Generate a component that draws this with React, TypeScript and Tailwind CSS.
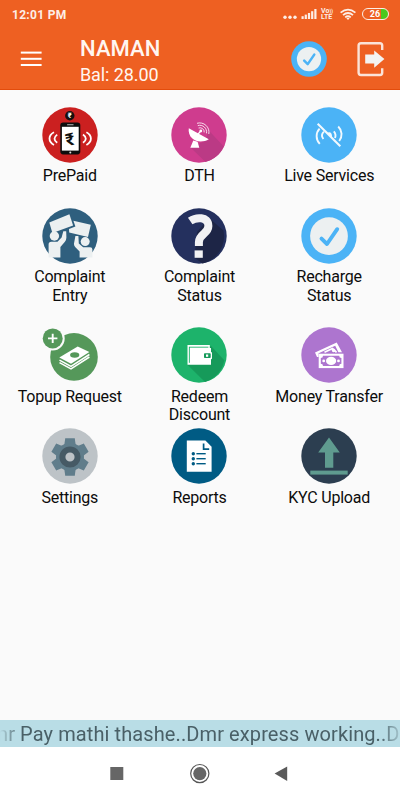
import React from "react";

function Disc({ fill, children }: { fill: string; children?: React.ReactNode }) {
  return (
    <svg viewBox="0 0 56 56" className="block h-14 w-14 shrink-0">
      <circle cx="28" cy="28" r="27.7" fill={fill} />
      {children}
    </svg>
  );
}

function PrepaidIcon() {
  return (
    <Disc fill="#cb2020">
      <circle cx="27.8" cy="8.8" r="4.7" fill="#151010" />
      <text x="27.8" y="11.4" textAnchor="middle" fontSize="7.5" fontWeight="700" fill="#fff" className="font-['Roboto']">₹</text>
      <rect x="18.3" y="15.4" width="20" height="32" rx="2.8" fill="#0d0d0d" />
      <rect x="19.9" y="19.8" width="16.8" height="23.8" fill="#fff" />
      <rect x="25" y="17.2" width="6.6" height="1" rx=".5" fill="#bbb" />
      <circle cx="28.3" cy="45.4" r="1" fill="#ddd" />
      <text x="28" y="38.4" textAnchor="middle" fontSize="17" fontWeight="700" fill="#111" transform="rotate(-14 28 32)" className="font-['Roboto']">₹</text>
      <g fill="none" stroke="#fff" strokeWidth="1.8">
        <path d="M12 25.3C6 28.4 6 34.8 12 38" />
        <path d="M15.2 27.6Q9.8 31.6 15.2 35.8" />
        <path d="M44.4 25.3C50.4 28.4 50.4 34.8 44.4 38" />
        <path d="M41 27.6Q46.6 31.6 41 35.8" />
      </g>
    </Disc>
  );
}

function DishIcon() {
  return (
    <Disc fill="#cf3c8e">
      <path d="M37.8 23.5L52.8 39.6A27.7 27.7 0 0 1 34.5 54.9L19.5 40.5L34 34Z" fill="#bb3a85" />
      <path d="M17.8 21.2L37.8 32.2C33.5 35 25.5 35.6 21.4 31.6C18.4 28.8 17.2 25 17.8 21.2Z" fill="#fff" />
      <path d="M22.3 33.5L26.6 34.8L28.3 40.8H19.3Z" fill="#fff" />
      <path d="M26.8 27.5L29.6 24.2" stroke="#fff" strokeWidth="1.3" />
      <circle cx="29.8" cy="24" r="1.4" fill="#fff" />
      <g fill="none" stroke="#fff" strokeOpacity=".8" strokeWidth="1">
        <path d="M27.6 21A4.2 4.2 0 0 1 33.2 25.4" />
        <path d="M26.8 18.6A6.8 6.8 0 0 1 35.5 26.3" />
        <path d="M26 16.3A9.3 9.3 0 0 1 37.8 27" />
      </g>
    </Disc>
  );
}

function LiveIcon() {
  return (
    <Disc fill="#4bb3f6">
      <g fill="none" stroke="#f2f9fe" strokeWidth="1.9">
        <path d="M18.6 21.6C14.6 26 14.6 32.4 18.8 36.8" />
        <path d="M22.9 24.6Q19.2 28.2 22.4 32" />
        <path d="M32.8 24.4C34.6 26.4 35 28.6 34 31" />
        <path d="M37.2 19.5C41.4 23.6 41.6 29.6 38.2 34" />
        <path d="M16.7 16.8L39.3 39.2" strokeWidth="2.1" />
      </g>
      <path d="M26 26.2L31 31Q31.4 25.6 28.6 25.2Q26.8 25.2 26 26.2Z" fill="#f2f9fe" />
    </Disc>
  );
}

function ProtestIcon() {
  return (
    <Disc fill="#2f5f7e">
      <g fill="#ecf0f1">
        <circle cx="12.4" cy="28" r="4.7" />
        <path d="M6.6 49.6V36.6Q6.6 33.8 9.4 33.8H15.5L19.6 29.6L21.3 23.2H24.2L24.4 29.6Q24.4 32 22.9 33.8L18.4 39V49.6Z" />
        <circle cx="43.2" cy="33.6" r="4.5" />
        <path d="M50.4 49.6V41.6Q50.4 39.2 48 39.2H41.2L36.8 35.4L36.4 28H33.4L32 35.4Q31.8 37.6 33.4 39.2L37.6 43.4V49.6Z" />
        <path d="M7.3 14.6L27.4 6.2L31.1 17.6L10.4 25Z" />
        <path d="M31.4 12.8L48.8 16.8L46 28.9L27.2 24.6L27 20.9L33.4 18.5Z" />
      </g>
    </Disc>
  );
}

function QuestionIcon() {
  return (
    <Disc fill="#24305e">
      <path d="M38 10L52.4 22.6A27.7 27.7 0 0 1 31.6 55.4L23.5 49.8L26 24Z" fill="#1d2546" />
      <path d="M19.2 13C24.8 9.2 37.4 8 37.4 18C37.4 26.2 27.9 25.6 27.9 34.2V38" fill="none" stroke="#f1f2f4" strokeWidth="8" />
      <rect x="23.6" y="42.4" width="8.2" height="7.4" fill="#f1f2f4" />
    </Disc>
  );
}

function CheckIcon({ size }: { size: string }) {
  return (
    <svg viewBox="0 0 56 56" className={"block shrink-0 " + size}>
      <circle cx="28" cy="28" r="27.7" fill="#4bb3f6" />
      <circle cx="28" cy="28.1" r="18.9" fill="#ecf0f1" />
      <path d="M20.5 30.6L26 36L36.2 21.2" fill="none" stroke="#4bb3f6" strokeWidth="3.9" strokeLinecap="round" strokeLinejoin="round" />
    </svg>
  );
}

function TopupIcon() {
  return (
    <svg viewBox="0 0 56 56" className="block h-14 w-14 shrink-0">
      <circle cx="32" cy="29.9" r="23.8" fill="#55985a" />
      <circle cx="10.7" cy="11.4" r="12" fill="#fafafa" />
      <circle cx="10.7" cy="11.4" r="10" fill="#55985a" />
      <path d="M6 11.4H15.4M10.7 6.7V16.1" stroke="#fff" strokeWidth="1.9" />
      <path d="M17.3 30.6L35.7 19.6L47.4 25L29 36.7Z" fill="#fff" />
      <g fill="none" stroke="#fff" strokeWidth="1.5">
        <path d="M17.5 33.2L29 39.4L47.4 27.5" />
        <path d="M17.5 35.7L29 41.8L47.4 30" />
      </g>
      <ellipse cx="32.7" cy="28" rx="4.6" ry="2.8" fill="#55985a" />
    </svg>
  );
}

function WalletIcon() {
  return (
    <Disc fill="#1db36b">
      <path d="M40 19L53.3 33.2A27.7 27.7 0 0 1 34 55L16.5 37.7Z" fill="#169a5a" />
      <path d="M16.5 18H38.8V21H40V37.7H16.5Z" fill="#fff" />
      <path d="M18 20.2H37.4M18.4 20V35.8" stroke="#1db36b" strokeWidth=".9" />
      <rect x="32.2" y="25" width="8.8" height="7.3" rx="1" fill="#fff" />
      <rect x="33" y="26.3" width="6.7" height="4.8" rx=".8" fill="#169a5a" />
      <rect x="35" y="27.5" width="2.2" height="2.3" fill="#fff" />
    </Disc>
  );
}

function MoneyIcon() {
  return (
    <Disc fill="#ad75cf">
      <path d="M14 25.6L35.7 15.6L41 25.3H37.4L34.2 18.7L17.6 26.2V30H16Z" fill="#fff" />
      <path d="M23.5 25.3L31.5 21.6Q34 23.6 35.6 25.3" fill="none" stroke="#fff" strokeWidth="1.7" />
      <circle cx="32.6" cy="23.4" r="1.8" fill="#fff" />
      <rect x="17.7" y="26.7" width="24.8" height="14.4" fill="#fff" />
      <path d="M22 28.8H38.2Q38.2 31 40.4 31V36.8Q38.2 36.8 38.2 39H22Q22 36.8 19.8 36.8V31Q22 31 22 28.8Z" fill="#ad75cf" />
      <ellipse cx="30.1" cy="33.9" rx="5.1" ry="4.2" fill="#fff" />
      <circle cx="22.7" cy="33.9" r="1.4" fill="#fff" />
      <circle cx="37.5" cy="33.9" r="1.4" fill="#fff" />
    </Disc>
  );
}

function GearIcon() {
  return (
    <Disc fill="#bdc3c7">
      <g fill="#607d8b">
        <circle cx="28" cy="29" r="14" />
        {[0, 60, 120].map((a) => (
          <path key={a} d="M23.2 10.3H32.8L33.8 18V40L32.8 47.7H23.2L22.2 40V18Z" transform={`rotate(${a} 28 29)`} />
        ))}
      </g>
      <circle cx="28" cy="29" r="7.6" fill="#bdc3c7" stroke="#465a65" strokeWidth="6" />
    </Disc>
  );
}

function ReportIcon() {
  return (
    <Disc fill="#005b84">
      <path d="M15.8 12.6H34.4L40.6 18.8V43.8H15.8Z" fill="#fff" />
      <path d="M32.6 15.4V21.1H38.2" fill="none" stroke="#005b84" strokeWidth="1.7" />
      <g fill="#005b84">
        {[25.7, 30.7, 35.7].map((y) => (
          <React.Fragment key={y}>
            <circle cx="22.3" cy={y} r="1.7" />
            <rect x="25.4" y={y - 0.7} width="9.3" height="1.4" />
          </React.Fragment>
        ))}
      </g>
    </Disc>
  );
}

function UploadIcon() {
  return (
    <Disc fill="#2c3e50">
      <path d="M28 9.6L38.8 24.4H32.3V39.7H24V24.4H17.2Z" fill="#5f9b8f" />
      <rect x="9.3" y="42.6" width="37.4" height="4" fill="#5f9b8f" />
    </Disc>
  );
}

type Item = { label: string[]; icon: React.ReactNode };

const rows: { height: string; items: Item[] }[] = [
  {
    height: "h-[101px]",
    items: [
      { label: ["PrePaid"], icon: <PrepaidIcon /> },
      { label: ["DTH"], icon: <DishIcon /> },
      { label: ["Live Services"], icon: <LiveIcon /> },
    ],
  },
  {
    height: "h-[119.5px]",
    items: [
      { label: ["Complaint", "Entry"], icon: <ProtestIcon /> },
      { label: ["Complaint", "Status"], icon: <QuestionIcon /> },
      { label: ["Recharge", "Status"], icon: <CheckIcon size="h-14 w-14" /> },
    ],
  },
  {
    height: "h-[101px]",
    items: [
      { label: ["Topup Request"], icon: <TopupIcon /> },
      { label: ["Redeem", "Discount"], icon: <WalletIcon /> },
      { label: ["Money Transfer"], icon: <MoneyIcon /> },
    ],
  },
  {
    height: "h-[101px]",
    items: [
      { label: ["Settings"], icon: <GearIcon /> },
      { label: ["Reports"], icon: <ReportIcon /> },
      { label: ["KYC Upload"], icon: <UploadIcon /> },
    ],
  },
];

function StatusBar() {
  return (
    <div className="flex h-7 items-center justify-between pr-[11px] pl-[12px] text-white">
      <span className="pt-px text-[12px] leading-none font-bold tracking-[0.3px] text-[#fdeee6]">12:01 PM</span>
      <div className="flex items-center">
        <svg viewBox="0 0 36 14" className="h-[14px] w-9" fill="#fdeee6">
          <circle cx="2" cy="10.2" r="1.7" />
          <circle cx="7" cy="10.2" r="1.7" />
          <circle cx="12" cy="10.2" r="1.7" />
          <rect x="18.5" y="9.2" width="2.2" height="2.8" />
          <rect x="21.7" y="7.6" width="2.2" height="4.4" />
          <rect x="24.9" y="6" width="2.2" height="6" />
          <rect x="28.1" y="4.2" width="2.2" height="7.8" />
          <rect x="31.3" y="2" width="2.2" height="10" />
        </svg>
        <div className="ml-[2.5px] flex w-[13px] flex-col text-[7px] leading-[6.5px] font-bold text-[#fdeee6]">
          <span>Vo<span className="text-[5px]">))</span></span>
          <span>LTE</span>
        </div>
        <svg viewBox="0 0 18 14" className="ml-[5px] h-[14px] w-[18px]" fill="none" stroke="#fdeee6" strokeWidth="1.8">
          <path d="M1.6 5.6Q9 -.4 16.4 5.6" />
          <path d="M4 8.1Q9 4 14 8.1" />
          <path d="M6.2 10.4Q9 8.2 11.8 10.4" />
          <path d="M9 13L7.4 11.3Q9 10.2 10.6 11.3Z" fill="#fdeee6" stroke="none" />
        </svg>
        <div className="ml-[5px] flex h-[12px] w-[27px] overflow-hidden rounded-full border-[1.5px] border-[#fdeee6] bg-[linear-gradient(90deg,transparent_0_72%,#4cc81c_72%)]">
          <span className="w-full pr-px text-center text-[9px] leading-[10px] font-bold text-white">26</span>
        </div>
      </div>
    </div>
  );
}

function Header() {
  return (
    <header className="h-[90px] shrink-0 border-b border-[#e34c0c] bg-[#ee6022] text-[#fff6f1]">
      <StatusBar />
      <div className="flex h-[61px] items-start">
        <svg viewBox="0 0 22 16" className="mt-[22.5px] ml-[20px] h-4 w-[22px]" fill="#fff">
          <rect x=".8" y=".6" width="20.8" height="2" />
          <rect x=".8" y="6.8" width="20.8" height="2" />
          <rect x=".8" y="13" width="20.8" height="2" />
        </svg>
        <div className="mt-[8px] ml-[38px] w-[211px]">
          <div className="text-[22px] leading-[26px] font-medium tracking-[0.1px]">NAMAN</div>
          <div className="mt-px text-[18px] leading-[24px] tracking-[-0.1px]">Bal: 28.00</div>
        </div>
        <div className="mt-[13px]">
          <CheckIcon size="h-9 w-9" />
        </div>
        <svg viewBox="0 0 30 36" className="mt-[13px] ml-[29px] h-9 w-[30px]">
          <path d="M26.2 9V4.4Q26.2 2.2 24 2.2H5Q2.6 2.2 2.6 4.6V31.6Q2.6 34 5 34H24Q26.2 34 26.2 31.8V27.2" fill="none" stroke="#fbe3d8" strokeWidth="2.4" />
          <path d="M9.2 13.6H18.2V9.4L28.4 18L18.2 26.8V22.6H9.2Z" fill="#f3f3f2" />
        </svg>
      </div>
    </header>
  );
}

export default function App() {
  return (
    <div className="flex h-[800px] w-[400px] flex-col overflow-hidden bg-[#fafafa] font-['Roboto',sans-serif]">
      <Header />
      <main className="flex-1 pt-[16.5px] pr-[6px] pl-[5px]">
        {rows.map((row, i) => (
          <div key={i} className={"grid grid-cols-3 " + row.height}>
            {row.items.map((item, j) => (
              <div key={j} className="flex flex-col items-center">
                {item.icon}
                <div className="mt-[4.5px] text-center text-[16px] leading-[18.5px] tracking-[-0.22px] whitespace-nowrap text-[#0c0c0c]">
                  {item.label.map((line) => (
                    <div key={line}>{line}</div>
                  ))}
                </div>
              </div>
            ))}
          </div>
        ))}
      </main>
      <div className="flex h-[27.5px] shrink-0 bg-[#b9dde6]">
        <div className="flex w-full items-center [mask-image:linear-gradient(90deg,transparent,black_20px,black_380px,transparent_404px)]">
          <span className="-ml-[9.5px] pt-[2px] text-[20px] leading-[27px] tracking-[0.1px] whitespace-nowrap text-[#4a6067]">
            mr Pay mathi thashe..Dmr express working..D
          </span>
        </div>
      </div>
      <nav className="flex h-[53px] shrink-0 items-center bg-white">
        <svg viewBox="0 0 400 53" className="h-[53px] w-[400px]">
          <rect x="110.3" y="20" width="13" height="13" fill="#666" />
          <circle cx="199.8" cy="26.6" r="9.1" fill="none" stroke="#555" strokeWidth="1.2" />
          <circle cx="199.8" cy="26.6" r="6.6" fill="#666" />
          <path d="M274.6 26.6L287.2 19.4V34Z" fill="#5a5a5a" />
        </svg>
      </nav>
    </div>
  );
}
